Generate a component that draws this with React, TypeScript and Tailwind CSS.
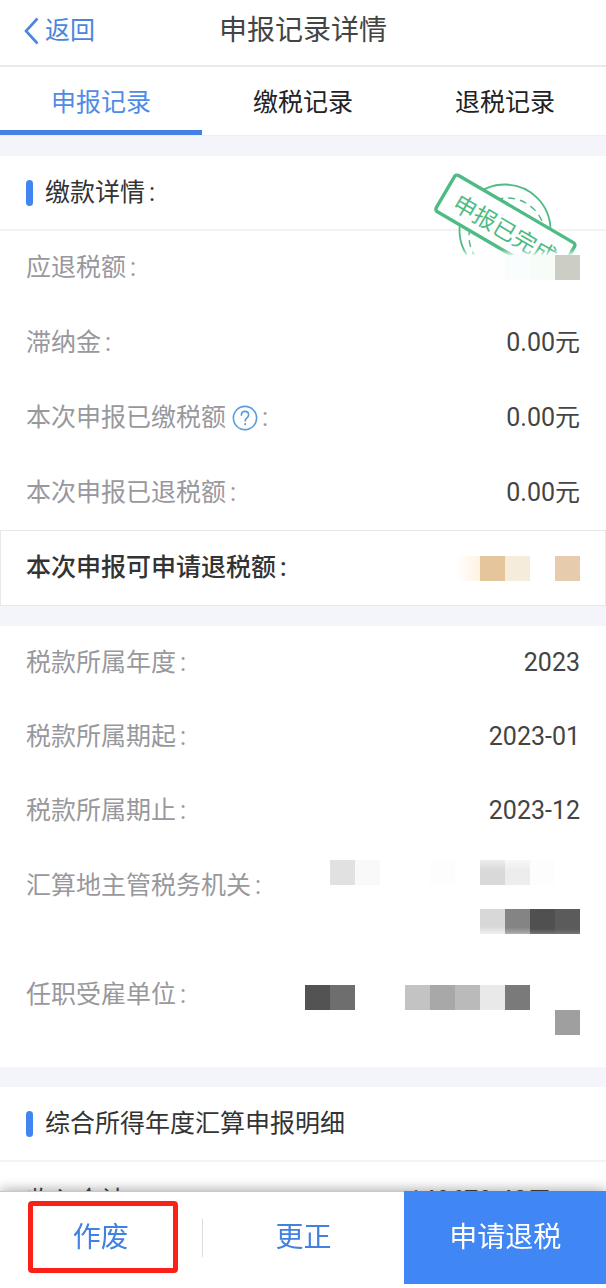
import React, { useState } from 'react';
import clsx from 'clsx';

type Row = {
    label: string;
    value?: string;
    help?: boolean;
    tiles?: string[];
};

const TABS = ['申报记录', '缴税记录', '退税记录'];

// Masked values, one class per 25px tile
const DUE_TILES = ['bg-white', 'bg-[#fdfefd]', 'bg-[#fafdfd]', 'bg-[#f8fcf8]', 'bg-[#cccec6]'];
const REFUND_TILES = ['bg-linear-to-r from-white to-[#fff3e2]', 'bg-[#e4c59c]', 'bg-[#f5ecdc]', 'bg-white', 'bg-[#e6ccad]'];
const OFFICE_TILES = [
    ['bg-[#e1e1e1]', 'bg-[#f9f9f9]', 'bg-white', 'bg-white', 'bg-[#fdfdfd]', 'bg-white', 'bg-linear-to-b from-[#eeeeee] to-[#d9d9d9] to-40%', 'bg-linear-to-b from-[#f8f8f8] to-[#ededed] to-40%', 'bg-[#fdfdfd]', 'bg-white'],
    ['bg-linear-to-b from-[#d8d8d8] from-70% to-[#f0f0f0]', 'bg-linear-to-b from-[#848484] from-75% to-[#b0b0b0]', 'bg-linear-to-b from-[#505050] from-80% to-[#777777]', 'bg-linear-to-b from-[#5b5b5b] from-80% to-[#777777]'],
];
const EMPLOYER_TILES = [
    ['bg-[#535353]', 'bg-[#6e6e6e]', 'bg-white', 'bg-white', 'bg-[#c3c3c3]', 'bg-[#a8a8a8]', 'bg-[#bababa]', 'bg-[#e9e9e9]', 'bg-[#7a7a7a]', 'bg-white', 'bg-white'],
    ['bg-[#9f9f9f]'],
];

const PAYMENT_ROWS: Row[] = [
    { label: '应退税额', tiles: DUE_TILES },
    { label: '滞纳金', value: '0.00元' },
    { label: '本次申报已缴税额', value: '0.00元', help: true },
    { label: '本次申报已退税额', value: '0.00元' },
];

const PERIOD_ROWS: Row[] = [
    { label: '税款所属年度', value: '2023' },
    { label: '税款所属期起', value: '2023-01' },
    { label: '税款所属期止', value: '2023-12' },
];

const Mosaic = ({ tiles }: { tiles: string[] }) => (
    <div className="flex justify-end">
        {tiles.map((tile, i) => <span key={i} className={clsx('size-[25px]', tile)} />)}
    </div>
);

const SectionTitle = ({ children }: { children: React.ReactNode }) => (
    <div className="flex h-[75px] items-center gap-3 border-b-2 border-[#f3f3f4] px-[26px]">
        <span className="h-[26px] w-[7px] rounded-full bg-[#4186f0]" />
        <h2 className="text-[#333]">{children}</h2>
    </div>
);

const HelpButton = () => (
    <button type="button" aria-label="说明" className="ml-[6px] text-[#5a9be0]">
        <svg viewBox="0 0 26 26" fill="none" stroke="currentColor" strokeWidth="1.6" strokeLinecap="round" className="size-[26px]">
            <circle cx="13" cy="13" r="11.6" />
            <path d="M9.4 10.2c0-2.3 1.5-3.8 3.6-3.8s3.6 1.4 3.6 3.5c0 2.8-3.4 3-3.4 6" />
            <path d="M13.2 18.9v.4" strokeWidth="2" />
        </svg>
    </button>
);

const Label = ({ text, help }: { text: string, help?: boolean }) => (
    <span className="flex items-center text-[#98989d]">
        {text}
        {help && <HelpButton />}
        <span className="ml-1">:</span>
    </span>
);

const InfoRow = ({ row, className }: { row: Row, className: string }) => (
    <div className={clsx('flex items-center justify-between px-[26px]', className)}>
        <Label text={row.label} help={row.help} />
        {row.value && <span className="text-[#444]">{row.value}</span>}
        {row.tiles && (
            <div className="relative z-20 bg-white shadow-[0_0_5px_2px_white]">
                <Mosaic tiles={row.tiles} />
            </div>
        )}
    </div>
);

const Stamp = () => (
    <svg viewBox="0 0 150 106" fill="none" stroke="#4fbb84" className="absolute top-[14px] right-[24px] z-10 h-[106px] w-[150px]">
        <circle cx="73" cy="60" r="45.5" strokeWidth="1.8" />
        <circle cx="75" cy="66" r="38" strokeWidth="1.4" strokeDasharray="7 5" />
        <g transform="translate(24 4) rotate(30.3)">
            <rect width="139" height="42" rx="3" fill="#fff" strokeWidth="3.4" />
            <text x="13" y="32" fontSize="23" fill="#4fbb84" stroke="none">申报已完成</text>
        </g>
    </svg>
);

const App = () => {
    const [activeTab, setActiveTab] = useState(0);

    return (
        <div className="flex h-screen flex-col bg-white font-[Roboto,'Noto_Sans_CJK_SC',sans-serif] text-[25px] leading-[36px]">
            <header className="relative flex h-[67px] shrink-0 items-center justify-center border-b-2 border-[#e9e9e9] pb-1">
                <a href="#" className="absolute left-[24px] flex items-center gap-[6px] text-[#4a86e0]">
                    <svg viewBox="0 0 15 28" fill="none" stroke="currentColor" strokeWidth="2.6" className="h-[28px] w-[15px]">
                        <path d="M13.5 1.5 2 14l11.5 12.5" />
                    </svg>
                    返回
                </a>
                <h1 className="text-[28px] text-[#444]">申报记录详情</h1>
            </header>

            <nav className="flex h-[69px] shrink-0 border-b border-[#eee]">
                {TABS.map((tab, i) => (
                    <button
                        key={tab}
                        type="button"
                        onClick={() => setActiveTab(i)}
                        className={clsx('flex-1 border-b-[5px] pt-2', activeTab === i ? 'border-[#4381e4] text-[#4f8be6]' : 'border-transparent text-[#222]')}
                    >
                        {tab}
                    </button>
                ))}
            </nav>

            <main className="min-h-0 flex-1 overflow-y-auto bg-[#f4f5fa] pt-5 [scrollbar-width:none]">
                <section className="relative bg-white">
                    <SectionTitle>缴款详情<span className="ml-1">:</span></SectionTitle>
                    <Stamp />
                    <div className="-mt-px">
                        {PAYMENT_ROWS.map(row => <InfoRow key={row.label} row={row} className="h-[75px]" />)}
                    </div>
                    <div className="flex h-[76px] items-center justify-between border border-[#e8e8e8] px-[25px]">
                        <span className="font-medium text-[#333]">本次申报可申请退税额<span className="ml-1">:</span></span>
                        <Mosaic tiles={REFUND_TILES} />
                    </div>
                </section>

                <section className="mt-5 bg-white">
                    {PERIOD_ROWS.map(row => <InfoRow key={row.label} row={row} className="h-[74px]" />)}
                    <div className="flex h-[110px] justify-between px-[26px] pt-3">
                        <div className="pt-2"><Label text="汇算地主管税务机关" /></div>
                        <div className="flex flex-col gap-6">
                            {OFFICE_TILES.map((tiles, i) => <Mosaic key={i} tiles={tiles} />)}
                        </div>
                    </div>
                    <div className="flex h-[109px] justify-between px-[26px] pt-[27px]">
                        <div className="-mt-2"><Label text="任职受雇单位" /></div>
                        <div>
                            {EMPLOYER_TILES.map((tiles, i) => <Mosaic key={i} tiles={tiles} />)}
                        </div>
                    </div>
                </section>

                <section className="mt-5 bg-white">
                    <SectionTitle>综合所得年度汇算申报明细</SectionTitle>
                    <a href="#" className="flex h-[78px] items-center justify-between px-[26px] text-[#444]">
                        <span>收入合计</span>
                        <span className="flex items-center gap-4">
                            148678.40元
                            <svg viewBox="0 0 12 22" fill="none" stroke="#999" strokeWidth="2" className="h-[22px] w-[12px]">
                                <path d="m1.5 1.5 9 9.5-9 9.5" />
                            </svg>
                        </span>
                    </a>
                </section>
            </main>

            <footer className="relative z-30 flex h-[97px] shrink-0 border-t border-[#c8c8c8] bg-white pb-1 text-[28px] text-[#4381e0] shadow-[0_-1px_12px_rgba(0,0,0,0.35)]">
                <button type="button" className="relative flex-1">
                    作废
                    <span className="absolute top-[9px] right-6 bottom-[11px] left-7 rounded-[4px] border-[5px] border-[#fb2116]" />
                </button>
                <span className="h-[38px] w-px self-center bg-[#dcdcdc]" />
                <button type="button" className="flex-1">更正</button>
                <button type="button" className="-mt-px flex-1 bg-[#4086f5] text-white">申请退税</button>
            </footer>
        </div>
    );
};

export default App;
